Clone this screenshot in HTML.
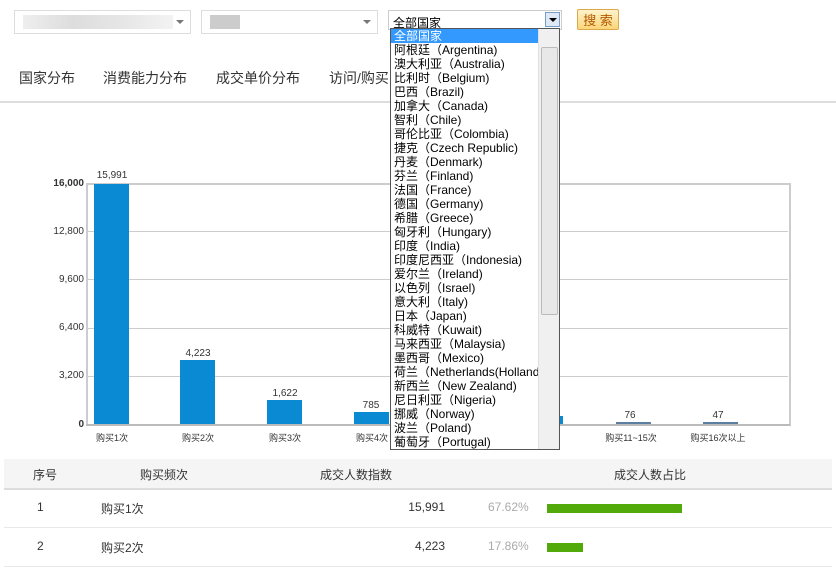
<!DOCTYPE html>
<html><head><meta charset="utf-8"><style>
body{margin:0;width:836px;height:571px;overflow:hidden;background:#fff;font-family:"Liberation Sans","Noto Sans CJK SC",sans-serif;position:relative}
.a{position:absolute}
.sel{position:absolute;border:1px solid #ddd;height:22px;background:#fff}
.arr{position:absolute;right:6px;top:9px;width:0;height:0;border-left:4px solid transparent;border-right:4px solid transparent;border-top:4px solid #777}
.tab{position:absolute;top:68px;font-size:14px;color:#333}
.grid{position:absolute;left:86px;width:702px;height:1px;background:#ccc}
.yl{position:absolute;right:752px;font-size:10px;color:#333;text-align:right}
.bar{position:absolute;background:#0a8ad3;width:35px}
.vl{position:absolute;font-size:10px;color:#333;width:60px;text-align:center}
.xl{position:absolute;top:431px;font-size:9px;color:#333;width:80px;text-align:center}
.list{position:absolute;left:390px;top:28px;width:168px;height:420px;border:1px solid #555;background:#fff;font-size:12px;line-height:14px;overflow:hidden}
.list div{padding-left:3px;white-space:nowrap;color:#000}
.td{position:absolute;font-size:12px;color:#333}
</style></head><body>
<div class="sel" style="left:14px;top:10px;width:175px"><div class="a" style="left:8px;top:4px;width:150px;height:14px;background:linear-gradient(90deg,#eee,#ddd,#e6e6e6,#f3f3f3)"></div><div class="arr"></div></div>
<div class="sel" style="left:201px;top:10px;width:175px"><div class="a" style="left:8px;top:4px;width:30px;height:14px;background:#ccc"></div><div class="arr"></div></div>
<div class="sel" style="left:388px;top:10px;width:172px;height:18px;border-color:#ccc;font-size:12px"><span class="a" style="left:4px;top:3px">全部国家</span><div class="a" style="right:1px;top:1px;width:15px;height:15px;border:1px solid #7a9cc4;background:#dfe9f5;box-sizing:border-box"><div class="a" style="left:3px;top:5px;border-left:4px solid transparent;border-right:4px solid transparent;border-top:4px solid #000"></div></div></div>
<div class="a" style="left:577px;top:9px;width:42px;height:21px;border:1px solid #d9a94a;border-radius:2px;background:linear-gradient(#fff3cc,#fbd57a);font-size:13px;color:#b05a00;text-align:center;line-height:21px;box-sizing:border-box">搜 索</div>
<div class="tab" style="left:19px">国家分布</div>
<div class="tab" style="left:103px">消费能力分布</div>
<div class="tab" style="left:216px">成交单价分布</div>
<div class="tab" style="left:329px">访问/购买</div>
<div class="a" style="left:0;top:101px;width:836px;height:2px;background:#ddd"></div>
<div class="a" style="left:86px;top:183px;width:701px;height:241px;border:2px solid #ccc;border-bottom:none"></div>
<div class="grid" style="top:231px"></div><div class="grid" style="top:279px"></div><div class="grid" style="top:328px"></div><div class="grid" style="top:376px"></div>
<div class="a" style="left:86px;top:424px;width:704px;height:2px;background:#bbb"></div>
<div class="yl" style="top:178px;font-weight:bold">16,000</div>
<div class="yl" style="top:226px">12,800</div>
<div class="yl" style="top:274px">9,600</div>
<div class="yl" style="top:322px">6,400</div>
<div class="yl" style="top:370px">3,200</div>
<div class="yl" style="top:419px;font-weight:bold">0</div>
<div class="bar" style="left:94px;top:184px;height:240px"></div><div class="vl" style="left:82px;top:170px">15,991</div>
<div class="bar" style="left:180px;top:360px;height:64px"></div><div class="vl" style="left:168px;top:348px">4,223</div>
<div class="bar" style="left:267px;top:400px;height:24px"></div><div class="vl" style="left:255px;top:388px">1,622</div>
<div class="bar" style="left:354px;top:412px;height:12px"></div><div class="vl" style="left:341px;top:400px">785</div>
<div class="bar" style="left:528px;top:416px;height:8px"></div>
<div class="bar" style="left:616px;top:422px;height:2px;background:#5a7fa0"></div><div class="vl" style="left:600px;top:410px">76</div>
<div class="bar" style="left:703px;top:422px;height:2px;background:#5a7fa0"></div><div class="vl" style="left:688px;top:410px">47</div>
<div class="xl" style="left:72px">购买1次</div><div class="xl" style="left:158px">购买2次</div><div class="xl" style="left:245px">购买3次</div><div class="xl" style="left:332px">购买4次</div>
<div class="xl" style="left:520px;width:60px;text-align:left">0次</div>
<div class="xl" style="left:591px">购买11~15次</div><div class="xl" style="left:678px">购买16次以上</div>
<div class="list">
<div style="background:#3399ff;color:#fff">全部国家</div>
<div>阿根廷（Argentina)</div><div>澳大利亚（Australia)</div><div>比利时（Belgium)</div><div>巴西（Brazil)</div><div>加拿大（Canada)</div><div>智利（Chile)</div><div>哥伦比亚（Colombia)</div><div>捷克（Czech Republic)</div><div>丹麦（Denmark)</div><div>芬兰（Finland)</div><div>法国（France)</div><div>德国（Germany)</div><div>希腊（Greece)</div><div>匈牙利（Hungary)</div><div>印度（India)</div><div>印度尼西亚（Indonesia)</div><div>爱尔兰（Ireland)</div><div>以色列（Israel)</div><div>意大利（Italy)</div><div>日本（Japan)</div><div>科威特（Kuwait)</div><div>马来西亚（Malaysia)</div><div>墨西哥（Mexico)</div><div>荷兰（Netherlands(Holland)</div><div>新西兰（New Zealand)</div><div>尼日利亚（Nigeria)</div><div>挪威（Norway)</div><div>波兰（Poland)</div><div>葡萄牙（Portugal)</div>
<div class="a" style="right:0;top:0;width:17px;height:420px;background:#f0f0f0;border-left:1px solid #e0e0e0"><div class="a" style="left:2px;top:18px;width:12px;height:266px;background:#e8e8e8;border:1px solid #bbb;border-radius:2px"></div></div>
</div>
<div class="a" style="left:4px;top:459px;width:828px;height:29px;background:#f5f5f5;border-bottom:2px solid #ddd"></div>
<div class="td" style="left:33px;top:466px">序号</div><div class="td" style="left:140px;top:466px">购买频次</div><div class="td" style="left:320px;top:466px">成交人数指数</div><div class="td" style="left:614px;top:466px">成交人数占比</div>
<div class="td" style="left:37px;top:500px">1</div><div class="td" style="left:101px;top:500px">购买1次</div><div class="td" style="left:400px;top:500px;width:45px;text-align:right">15,991</div><div class="td" style="left:488px;top:500px;color:#aaa">67.62%</div><div class="a" style="left:547px;top:504px;width:135px;height:9px;background:#52a90a"></div>
<div class="a" style="left:4px;top:527px;width:828px;height:1px;background:#e8e8e8"></div>
<div class="td" style="left:37px;top:539px">2</div><div class="td" style="left:101px;top:539px">购买2次</div><div class="td" style="left:400px;top:539px;width:45px;text-align:right">4,223</div><div class="td" style="left:488px;top:539px;color:#aaa">17.86%</div><div class="a" style="left:547px;top:543px;width:36px;height:9px;background:#52a90a"></div>
<div class="a" style="left:4px;top:566px;width:828px;height:1px;background:#e8e8e8"></div>
</body></html>
